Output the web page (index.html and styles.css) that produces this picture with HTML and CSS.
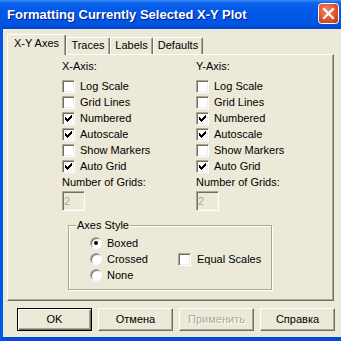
FILE: index.html
```html
<!DOCTYPE html>
<html lang="en">
<head>
    <meta charset="UTF-8">
    <title>Formatting Currently Selected X-Y Plot</title>
    <link rel="stylesheet" href="styles.css">
</head>
<body>
    <div class="window">
        <div class="titlebar">
            <span class="title">Formatting Currently Selected X-Y Plot</span>
            <span class="close">
                <svg width="21" height="21" viewBox="0 0 21 21">
                    <defs>
                        <radialGradient id="cg" cx="0.4" cy="0.35" r="0.8">
                            <stop offset="0" stop-color="#F08A6C"/>
                            <stop offset="0.55" stop-color="#E0552F"/>
                            <stop offset="1" stop-color="#C23A14"/>
                        </radialGradient>
                    </defs>
                    <rect x="0.5" y="0.5" width="20" height="20" rx="3" fill="url(#cg)" stroke="#fff"/>
                    <path d="M6 6L15 15M15 6L6 15" stroke="#fff" stroke-width="2.2" stroke-linecap="square"/>
                </svg>
            </span>
        </div>
        <div class="client">
            <div class="tabs">
                <div class="tab active">X-Y Axes</div>
                <div class="tab traces">Traces</div>
                <div class="tab labels">Labels</div>
                <div class="tab defaults">Defaults</div>
            </div>
            <div class="panel">
                <div class="axes">
                    <div class="axis">
                        <div class="axis-title">X-Axis:</div>
                        <div class="check"><span class="box"></span>Log Scale</div>
                        <div class="check"><span class="box"></span>Grid Lines</div>
                        <div class="check"><span class="box"><svg width="7" height="7" viewBox="0 0 7 7"><path d="M0 2h1v1h1v1h1v-1h1v-1h1v-1h1v-1h1v3h-1v1h-1v1h-1v1h-1v1h-1v-1h-1v-1h-1z"/></svg></span>Numbered</div>
                        <div class="check"><span class="box"><svg width="7" height="7" viewBox="0 0 7 7"><path d="M0 2h1v1h1v1h1v-1h1v-1h1v-1h1v-1h1v3h-1v1h-1v1h-1v1h-1v1h-1v-1h-1v-1h-1z"/></svg></span>Autoscale</div>
                        <div class="check"><span class="box"></span>Show Markers</div>
                        <div class="check"><span class="box"><svg width="7" height="7" viewBox="0 0 7 7"><path d="M0 2h1v1h1v1h1v-1h1v-1h1v-1h1v-1h1v3h-1v1h-1v1h-1v1h-1v1h-1v-1h-1v-1h-1z"/></svg></span>Auto Grid</div>
                        <div class="grids-label">Number of Grids:</div>
                        <div class="field">2</div>
                    </div>
                    <div class="axis">
                        <div class="axis-title">Y-Axis:</div>
                        <div class="check"><span class="box"></span>Log Scale</div>
                        <div class="check"><span class="box"></span>Grid Lines</div>
                        <div class="check"><span class="box"><svg width="7" height="7" viewBox="0 0 7 7"><path d="M0 2h1v1h1v1h1v-1h1v-1h1v-1h1v-1h1v3h-1v1h-1v1h-1v1h-1v1h-1v-1h-1v-1h-1z"/></svg></span>Numbered</div>
                        <div class="check"><span class="box"><svg width="7" height="7" viewBox="0 0 7 7"><path d="M0 2h1v1h1v1h1v-1h1v-1h1v-1h1v-1h1v3h-1v1h-1v1h-1v1h-1v1h-1v-1h-1v-1h-1z"/></svg></span>Autoscale</div>
                        <div class="check"><span class="box"></span>Show Markers</div>
                        <div class="check"><span class="box"><svg width="7" height="7" viewBox="0 0 7 7"><path d="M0 2h1v1h1v1h1v-1h1v-1h1v-1h1v-1h1v3h-1v1h-1v1h-1v1h-1v1h-1v-1h-1v-1h-1z"/></svg></span>Auto Grid</div>
                        <div class="grids-label">Number of Grids:</div>
                        <div class="field">2</div>
                    </div>
                </div>
                <fieldset class="group">
                    <legend>Axes Style</legend>
                    <div class="style-row">
                        <div class="radios">
                            <div class="option"><span class="radio"><span class="dot"></span></span>Boxed</div>
                            <div class="option"><span class="radio"></span>Crossed</div>
                            <div class="option"><span class="radio"></span>None</div>
                        </div>
                        <div class="option equal"><span class="box"></span>Equal Scales</div>
                    </div>
                </fieldset>
            </div>
            <div class="buttons">
                <div class="btn default">OK</div>
                <div class="btn">Отмена</div>
                <div class="btn disabled">Применить</div>
                <div class="btn">Справка</div>
            </div>
        </div>
    </div>
</body>
</html>
```

FILE: styles.css
```css
:root {
    --face: #ECE9D8;
    --shadow: #ACA899;
    --dark: #716F64;
    --light: #F1EFE2;
    --frame: #0055EA;
}

* {
    margin: 0;
    padding: 0;
    box-sizing: border-box;
}

body {
    font-family: 'Liberation Sans', Arial, sans-serif;
    font-size: 11px;
    line-height: 13px;
    color: #000;
    background-color: var(--face);
}

.window {
    width: 341px;
    height: 341px;
    overflow: hidden;
}

/* title bar */
.titlebar {
    height: 29px;
    display: flex;
    justify-content: space-between;
    align-items: flex-start;
    padding: 3px 2px 0 7px;
    background: linear-gradient(to bottom, #3D8EF7 0, #0A61EA 3px, #0058E8 12px, #0054E2 24px, #0044CC 29px);
}

.title {
    padding-top: 1px;
    font-size: 13px;
    font-weight: 700;
    line-height: 21px;
    color: #fff;
    text-shadow: 1px 1px 0 #0A1883;
    white-space: nowrap;
}

.close {
    width: 21px;
    height: 21px;
}

.close svg {
    display: block;
}

/* client area */
.client {
    height: 312px;
    border-left: 3px solid var(--frame);
    border-bottom: 4px solid #0848D8;
    padding: 5px 0 0 4px;
}

.tabs {
    display: flex;
    align-items: flex-end;
    height: 20px;
}

.tab {
    height: 17px;
    line-height: 14px;
    text-align: center;
    border-top: 1px solid #fff;
    border-left: 1px solid #fff;
    border-right: 1px solid var(--dark);
    box-shadow: inset -1px 0 0 var(--shadow);
    border-radius: 2px 2px 0 0;
    white-space: nowrap;
}

.tab.active {
    position: relative;
    z-index: 1;
    width: 59px;
    height: 21px;
    line-height: 16px;
    margin-bottom: -1px;
    background-color: var(--face);
}

.tab.traces { width: 44px; }
.tab.labels { width: 43px; }
.tab.defaults { width: 50px; }

.panel {
    width: 327px;
    height: 247px;
    border: 1px solid;
    border-color: #fff var(--dark) var(--dark) #fff;
    box-shadow: inset -1px -1px 0 var(--shadow);
    padding: 5px 0 0 54px;
}

.axes {
    display: flex;
}

.axis {
    width: 134px;
}

.axis-title {
    height: 13px;
    margin-bottom: 5px;
}

.check {
    display: flex;
    align-items: center;
    height: 16px;
    white-space: nowrap;
}

.box {
    flex: none;
    width: 13px;
    height: 13px;
    padding: 2px;
    margin-right: 5px;
    background-color: #fff;
    border: 1px solid;
    border-color: var(--shadow) #fff #fff var(--shadow);
    box-shadow: inset 1px 1px 0 var(--dark), inset -1px -1px 0 var(--light);
}

.box svg {
    display: block;
}

.grids-label {
    margin-top: 2px;
    height: 13px;
}

.field {
    width: 23px;
    height: 20px;
    margin-top: 2px;
    padding: 1px 0 0 1px;
    line-height: 16px;
    color: var(--shadow);
    border: 1px solid;
    border-color: var(--shadow) #fff #fff var(--shadow);
    box-shadow: inset 1px 1px 0 var(--dark), inset -1px -1px 0 var(--light);
}

/* axes style group */
.group {
    width: 204px;
    margin: 8px 0 0 6px;
    border: 1px solid var(--shadow);
    box-shadow: 1px 1px 0 #fff, inset 1px 1px 0 #fff;
    padding: 0;
}

.group legend {
    margin-left: 7px;
    padding: 0 1px;
    background-color: var(--face);
}

.style-row {
    display: flex;
    align-items: center;
    padding: 3px 0 6px 21px;
}

.radios {
    width: 88px;
}

.option {
    display: flex;
    align-items: center;
    height: 16px;
    white-space: nowrap;
}

.option .box {
    margin-right: 6px;
}

.radio {
    flex: none;
    display: flex;
    align-items: center;
    justify-content: center;
    width: 12px;
    height: 12px;
    margin-right: 5px;
    border-radius: 50%;
    background-color: #fff;
    border: 1px solid;
    border-color: var(--shadow) #fff #fff var(--shadow);
    box-shadow: inset 1px 1px 0 var(--dark);
}

.dot {
    width: 4px;
    height: 4px;
    border-radius: 50%;
    background-color: #000;
}

/* buttons */
.buttons {
    display: flex;
    gap: 6px;
    margin: 7px 0 0 10px;
}

.btn {
    width: 75px;
    height: 23px;
    line-height: 21px;
    text-align: center;
    border: 1px solid;
    border-color: #fff var(--dark) var(--dark) #fff;
    box-shadow: inset -1px -1px 0 var(--shadow);
}

.btn.default {
    border-color: #000;
    box-shadow: inset 1px 1px 0 #fff, inset -1px -1px 0 var(--dark), inset -2px -2px 0 var(--shadow);
}

.btn.disabled {
    color: var(--shadow);
    text-shadow: 1px 1px 0 #fff;
}
```
